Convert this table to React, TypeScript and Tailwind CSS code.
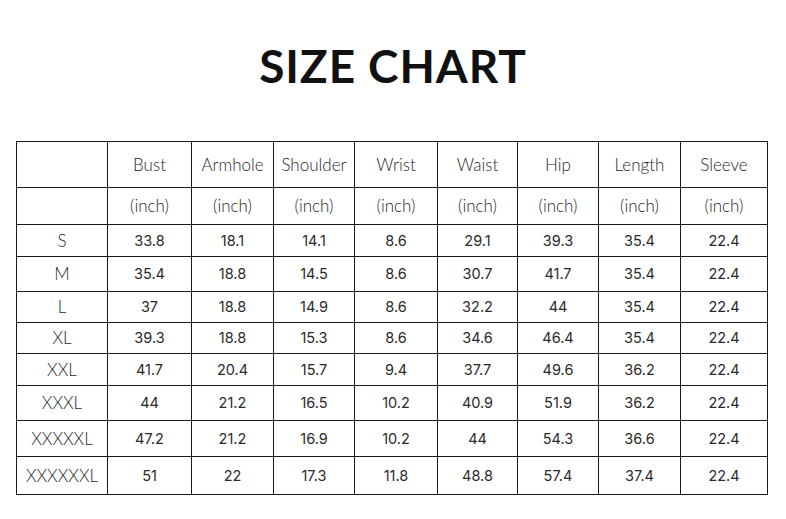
import React from 'react';

const rowHeights = [45, 36, 31, 34, 30, 30, 31, 34, 35, 37];

const headers = ['Bust', 'Armhole', 'Shoulder', 'Wrist', 'Waist', 'Hip', 'Length', 'Sleeve'];

const rows: [string, ...string[]][] = [
  ['S', '33.8', '18.1', '14.1', '8.6', '29.1', '39.3', '35.4', '22.4'],
  ['M', '35.4', '18.8', '14.5', '8.6', '30.7', '41.7', '35.4', '22.4'],
  ['L', '37', '18.8', '14.9', '8.6', '32.2', '44', '35.4', '22.4'],
  ['XL', '39.3', '18.8', '15.3', '8.6', '34.6', '46.4', '35.4', '22.4'],
  ['XXL', '41.7', '20.4', '15.7', '9.4', '37.7', '49.6', '36.2', '22.4'],
  ['XXXL', '44', '21.2', '16.5', '10.2', '40.9', '51.9', '36.2', '22.4'],
  ['XXXXXL', '47.2', '21.2', '16.9', '10.2', '44', '54.3', '36.6', '22.4'],
  ['XXXXXXL', '51', '22', '17.3', '11.8', '48.8', '57.4', '37.4', '22.4'],
];

const labelFont = "font-['Lato',sans-serif] font-light text-[17px] text-[#1f1f1f]";
const numFont = "font-['Inter',sans-serif] text-[14.5px] text-[#2a2a2a]";

export default function App() {
  const gridRows = rowHeights.map((h) => `${h}px`).join(' ');
  return (
    <div className="w-[786px] h-[519px] bg-white">
      <div className="h-[141px] flex justify-center pt-[43px]">
        <h1 className="font-['Lato',sans-serif] font-bold text-[46px] leading-none tracking-[0.02em] text-[#111]">
          SIZE CHART
        </h1>
      </div>
      <div className="pl-[16px]">
        <div
          className="grid w-fit gap-px p-px bg-[#1a1a1a] grid-cols-[90px_83px_81px_80px_82px_79px_80px_81px_86px]"
          style={{ gridTemplateRows: gridRows }}
        >
          <div className="bg-white" />
          {headers.map((h) => (
            <div key={h} className={`bg-white flex items-center justify-center ${labelFont}`}>
              {h}
            </div>
          ))}
          <div className="bg-white" />
          {headers.map((h) => (
            <div key={h + '-u'} className={`bg-white flex items-center justify-center ${labelFont}`}>
              (inch)
            </div>
          ))}
          {rows.map((r) =>
            r.map((v, i) => (
              <div
                key={r[0] + i}
                className={`bg-white flex items-center justify-center ${i === 0 ? labelFont : numFont}`}
              >
                {v}
              </div>
            ))
          )}
        </div>
      </div>
    </div>
  );
}
